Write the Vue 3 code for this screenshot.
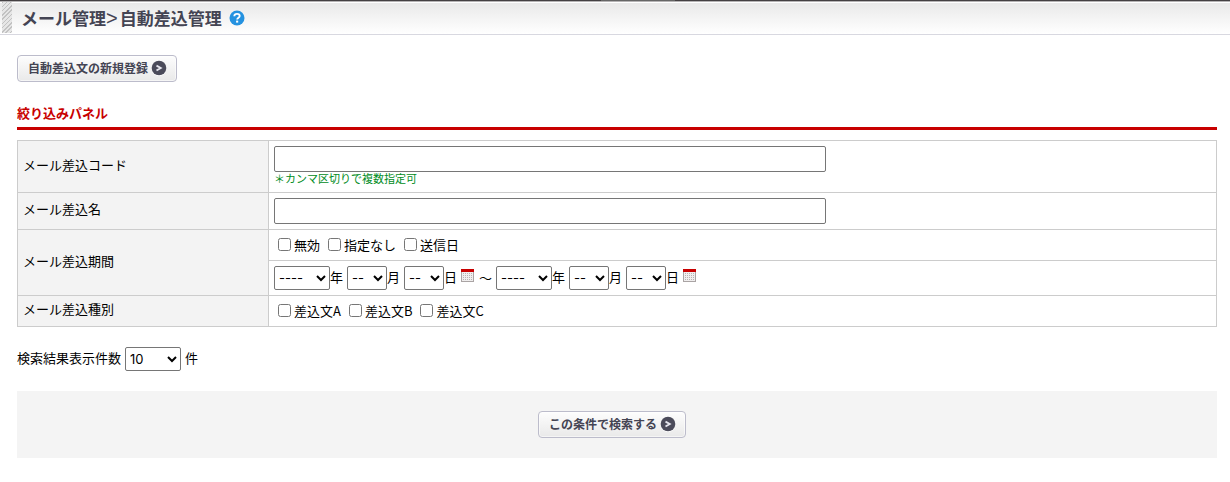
<script setup>
import { ref } from 'vue'

const code = ref('')
const name = ref('')
const perPage = ref('10')
const periods = ['無効', '指定なし', '送信日']
const kinds = ['差込文A', '差込文B', '差込文C']
const ends = ['開始', '終了']
const years = ['2020', '2021', '2022', '2023', '2024']
const pad = (n) => String(n).padStart(2, '0')
</script>

<template>
  <div class="page">
    <header class="bar">
      <span class="grip"></span>
      <h1>メール管理<span class="sep">&gt;</span>自動差込管理</h1>
      <a href="#help" class="help" aria-label="ヘルプ">
        <svg width="16" height="16" viewBox="0 0 16 16">
          <circle cx="8" cy="8" r="7.500" fill="#2592e0" />
          <path d="M5.300 6.200C5.400 4.600 6.500 3.900 8 3.900c1.600 0 2.700.8 2.700 2.100C10.700 7.700 8.200 7.800 8.200 9.500" fill="none" stroke="#fff" stroke-width="1.900" />
          <rect x="7.100" y="10.600" width="2.100" height="2" fill="#fff" />
        </svg>
      </a>
    </header>

    <main>
      <button type="button" class="btn">
        自動差込文の新規登録
        <svg width="16" height="16" viewBox="0 0 16 16">
          <circle cx="8" cy="8.800" r="7.200" fill="#fff" />
          <circle cx="8" cy="8" r="7.300" fill="#4b4b5a" />
          <path d="M5.500 5.600 9.800 8 5.500 10.600" fill="none" stroke="#e6e6ee" stroke-width="1.800" />
        </svg>
      </button>

      <h2>絞り込みパネル</h2>

      <table>
        <tbody>
          <tr class="r-code">
            <th scope="row"><label for="code">メール差込コード</label></th>
            <td>
              <input id="code" v-model="code" type="text" class="text" />
              <p class="hint">＊カンマ区切りで複数指定可</p>
            </td>
          </tr>
          <tr class="r-name">
            <th scope="row"><label for="name">メール差込名</label></th>
            <td><input id="name" v-model="name" type="text" class="text" /></td>
          </tr>
          <tr class="r-check">
            <th scope="row" rowspan="2">メール差込期間</th>
            <td>
              <div class="checks">
                <label v-for="p in periods" :key="p"><input type="checkbox" />{{ p }}</label>
              </div>
            </td>
          </tr>
          <tr class="r-date">
            <td>
              <div class="range">
                <template v-for="(end, i) in ends" :key="end">
                  <span v-if="i" class="tilde">～</span>
                  <div class="date">
                    <label><select class="wide" :aria-label="end + '年'">
                      <option>----</option>
                      <option v-for="y in years" :key="y">{{ y }}</option>
                    </select><span>年</span></label>
                    <label><select class="narrow" :aria-label="end + '月'">
                      <option>--</option>
                      <option v-for="m in 12" :key="m">{{ pad(m) }}</option>
                    </select><span>月</span></label>
                    <label><select class="narrow" :aria-label="end + '日'">
                      <option>--</option>
                      <option v-for="d in 31" :key="d">{{ pad(d) }}</option>
                    </select><span>日</span></label>
                    <button type="button" class="cal" :aria-label="end + '日をカレンダーで選択'">
                      <svg width="13" height="13" viewBox="0 0 13 13" shape-rendering="crispEdges">
                        <rect x="0.500" y="2.500" width="12" height="10" fill="#f0eeee" stroke="#aaa4a4" />
                        <path d="M2 4.500h9M2 6.500h9M2 8.500h9M2 10.500h9" stroke="#b8b2b2" stroke-dasharray="1 1" />
                        <rect width="13" height="3" fill="#c80000" />
                      </svg>
                    </button>
                  </div>
                </template>
              </div>
            </td>
          </tr>
          <tr class="r-check">
            <th scope="row">メール差込種別</th>
            <td>
              <div class="checks">
                <label v-for="k in kinds" :key="k"><input type="checkbox" />{{ k }}</label>
              </div>
            </td>
          </tr>
        </tbody>
      </table>

      <div class="count">
        <label for="per">検索結果表示件数</label>
        <select id="per" v-model="perPage" class="wide">
          <option>10</option>
          <option>20</option>
          <option>50</option>
          <option>100</option>
        </select>
        <span>件</span>
      </div>

      <div class="submit">
        <button type="button" class="btn">
          この条件で検索する
          <svg width="16" height="16" viewBox="0 0 16 16">
            <circle cx="8" cy="8.800" r="7.200" fill="#fff" />
            <circle cx="8" cy="8" r="7.300" fill="#4b4b5a" />
            <path d="M5.500 5.600 9.800 8 5.500 10.600" fill="none" stroke="#e6e6ee" stroke-width="1.800" />
          </svg>
        </button>
      </div>
    </main>
  </div>
</template>

<style>
body {
  margin: 0;
  background: #fff;
}
</style>

<style scoped>
.page {
  font-family: "Noto Sans CJK JP", sans-serif;
  font-size: 13px;
  line-height: 18px;
  color: #000;
}
.bar {
  display: flex;
  align-items: center;
  box-sizing: border-box;
  height: 35px;
  padding: 3px 0 2px 2px;
  border-bottom: 1px solid #d8d8e0;
  background:
    linear-gradient(#666 0 0) 52% 0 / 74px 1px no-repeat,
    linear-gradient(#444042 0 1px, #b5b3b4 1px 2px, #fff 2px 3px, #e9e9e9 3px, #fff 34px);
}
.grip {
  width: 10px;
  height: 31px;
  background: repeating-linear-gradient(135deg, #c2c2c2 0 1px, #e6e6e6 1px 3px);
}
h1 {
  margin: 0 7px 0 9px;
  font-size: 17px;
  line-height: 24px;
  font-weight: 700;
  color: #444453;
}
.sep {
  margin-right: 2px;
  font-family: "Liberation Sans", sans-serif;
  font-size: 20px;
  line-height: 20px;
  font-weight: 400;
}
.help,
.help svg,
.btn svg,
.cal svg {
  display: block;
}
main {
  padding: 20px 13px 0 17px;
}
.btn {
  display: inline-flex;
  align-items: center;
  gap: 3px;
  box-sizing: border-box;
  height: 27px;
  padding: 0 9px 2px 10px;
  border: 1px solid #bcbccb;
  border-radius: 4px;
  background: linear-gradient(#fdfdfd, #e9e9e9);
  box-shadow: inset 0 0 0 1px #fff8;
  font: 700 12px/18px "Noto Sans CJK JP", sans-serif;
  color: #444453;
}
h2 {
  margin: 22px 0 10px;
  padding-bottom: 5px;
  border-bottom: 3px solid #c80000;
  font-size: 13px;
  line-height: 18px;
  font-weight: 700;
  color: #c80000;
}
table {
  width: 100%;
  border-collapse: collapse;
  table-layout: fixed;
}
th,
td {
  padding: 0 5px;
  border: 1px solid #ccc;
  vertical-align: middle;
  text-align: left;
}
th {
  width: 240px;
  padding-bottom: 4px;
  background: #f3f3f3;
  font-weight: 400;
}
.r-code {
  height: 52px;
}
.r-name {
  height: 37px;
}
.r-check {
  height: 31px;
}
.r-date {
  height: 35px;
}
.r-code td {
  padding-top: 5px;
  vertical-align: top;
}
.text {
  display: block;
  box-sizing: border-box;
  width: 100%;
  max-width: 552px;
  height: 26px;
  padding: 1px 4px;
  border: 1px solid #767676;
  border-radius: 2px;
  font: inherit;
}
.hint {
  margin: 0;
  font-size: 11px;
  line-height: 12px;
  color: #008c23;
}
.checks {
  display: flex;
  gap: 4px;
}
.checks label {
  display: flex;
  align-items: center;
}
.checks input {
  width: 13px;
  height: 13px;
  margin: 0 3px 2px 4px;
}
.range,
.date,
.date label {
  display: flex;
  align-items: center;
}
.date {
  gap: 4px;
}
.date span,
.count label,
.count span {
  padding-bottom: 2px;
}
.tilde {
  margin: 0 4px 0 5px;
}
select {
  box-sizing: border-box;
  height: 24px;
  padding-bottom: 1px;
  border: 1px solid #767676;
  border-radius: 2px;
  background: #fff;
  font: 13px/18px Inter, "Noto Sans CJK JP", sans-serif;
  color: #000;
}
.wide {
  width: 56px;
}
.narrow {
  width: 40px;
}
.cal {
  margin-bottom: 5px;
  padding: 0;
  border: 0;
  background: none;
}
.count {
  display: flex;
  align-items: center;
  gap: 4px;
  margin: 20px 0;
}
.submit {
  display: flex;
  justify-content: center;
  padding: 20px 20px 20px 10px;
  background: #f4f4f4;
}
</style>
